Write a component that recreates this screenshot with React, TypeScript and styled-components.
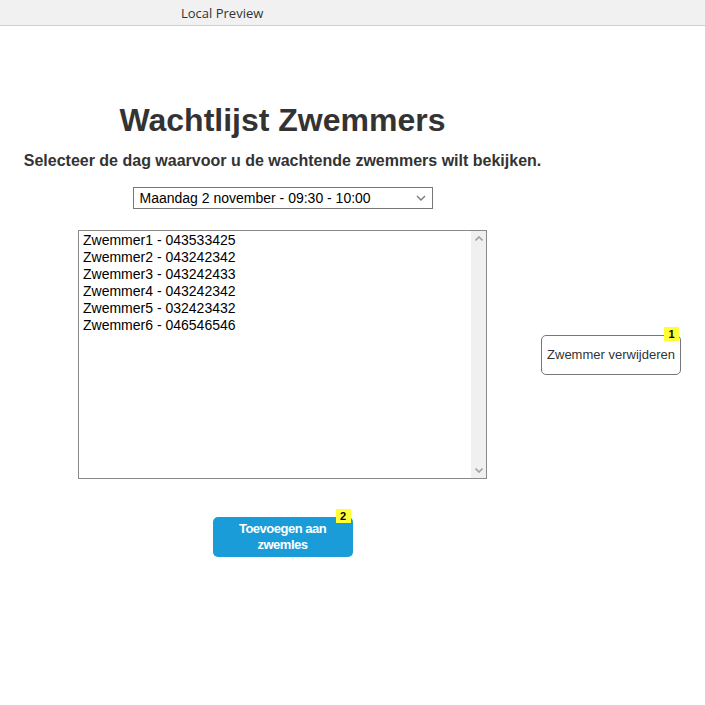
import React from "react";
import styled, { createGlobalStyle } from "styled-components";

const Global = createGlobalStyle`
  html, body { margin: 0; padding: 0; background: #fff; }
  body { font-family: "Liberation Sans", Arial, sans-serif; color: #333; }
`;

const TopBar = styled.div`
  height: 26px;
  background: #f1f1f1;
  border-bottom: 1px solid #d0d0d0;
  box-sizing: border-box;
  display: flex;
  align-items: center;
  padding-left: 181px;
  font-family: "Open Sans", "Noto Sans", sans-serif;
  font-size: 13px;
  color: #333;
`;

const Column = styled.div`
  width: 565px;
  display: flex;
  flex-direction: column;
  align-items: center;
`;

const Title = styled.h1`
  margin: 76px 0 0;
  font-size: 32px;
  line-height: 37px;
  font-weight: bold;
  color: #333;
`;

const Subtitle = styled.h3`
  margin: 12px 0 0;
  font-size: 16px;
  line-height: 19px;
  font-weight: bold;
  color: #333;
`;

const SelectWrap = styled.div`
  position: relative;
  margin-top: 17px;
  width: 300px;
  height: 22px;
`;

const DaySelect = styled.select`
  appearance: none;
  -webkit-appearance: none;
  width: 300px;
  height: 22px;
  box-sizing: border-box;
  font-family: "Liberation Sans", Arial, sans-serif;
  font-size: 14px;
  color: #000;
  border: 1px solid #767676;
  border-radius: 0;
  background: #fff;
  padding: 0 6px;
  outline: none;
`;

const SelectArrow = styled.svg`
  position: absolute;
  right: 7px;
  top: 8px;
  pointer-events: none;
`;

const ListRow = styled.div`
  align-self: flex-start;
  width: 705px;
  display: flex;
  align-items: center;
  margin-top: 21px;
`;

const ListBox = styled.div`
  margin-left: 78px;
  width: 409px;
  height: 249px;
  box-sizing: border-box;
  border: 1px solid #8a8a8a;
  display: flex;
`;

const ListItems = styled.div`
  flex: 1;
  padding: 1px 4px;
  font-size: 14px;
  line-height: 17px;
  color: #000;
`;

const Item = styled.div``;

const ScrollTrack = styled.div`
  width: 15px;
  background: #f0f0f0;
  display: flex;
  flex-direction: column;
  justify-content: space-between;
  align-items: center;
  padding: 5px 0;
`;

const BadgeWrap = styled.div`
  position: relative;
  display: inline-block;
`;

const Badge = styled.span`
  position: absolute;
  top: -8px;
  right: 2px;
  width: 15px;
  height: 14px;
  background: #ffff33;
  color: #000;
  font-size: 11px;
  font-weight: bold;
  line-height: 14px;
  text-align: center;
`;

const Button = styled.button<{ $primary?: boolean }>`
  display: block;
  width: 140px;
  height: 40px;
  border-radius: 5px;
  font-family: "Liberation Sans", Arial, sans-serif;
  font-size: 13px;
  line-height: 16px;
  padding: 0;
  white-space: ${(p) => (p.$primary ? "normal" : "nowrap")};
  letter-spacing: ${(p) => (p.$primary ? "-0.5px" : "0")};
  cursor: pointer;
  border: ${(p) => (p.$primary ? "none" : "1px solid #767676")};
  background: ${(p) => (p.$primary ? "#1a9cd8" : "#fff")};
  color: ${(p) => (p.$primary ? "#fff" : "#333")};
  font-weight: ${(p) => (p.$primary ? "bold" : "normal")};
`;

const Side = styled.div`
  margin-left: 54px;
`;

const AddWrap = styled.div`
  margin-top: 38px;
`;

const swimmers = [
  "Zwemmer1 - 043533425",
  "Zwemmer2 - 043242342",
  "Zwemmer3 - 043242433",
  "Zwemmer4 - 043242342",
  "Zwemmer5 - 032423432",
  "Zwemmer6 - 046546546",
];

export default function App() {
  return (
    <>
      <Global />
      <TopBar>Local Preview</TopBar>
      <Column>
        <Title>Wachtlijst Zwemmers</Title>
        <Subtitle>Selecteer de dag waarvoor u de wachtende zwemmers wilt bekijken.</Subtitle>
        <SelectWrap>
          <DaySelect defaultValue="a">
            <option value="a">Maandag 2 november - 09:30 - 10:00</option>
          </DaySelect>
          <SelectArrow width="10" height="6" viewBox="0 0 10 6">
            <path d="M1 1 L5 5 L9 1" fill="none" stroke="#777" strokeWidth="1.3" />
          </SelectArrow>
        </SelectWrap>
        <ListRow>
          <ListBox>
            <ListItems>
              {swimmers.map((s) => (
                <Item key={s}>{s}</Item>
              ))}
            </ListItems>
            <ScrollTrack>
              <svg width="8" height="5" viewBox="0 0 8 5">
                <path d="M0.5 4.5 L4 1 L7.5 4.5" fill="none" stroke="#a3a3a3" strokeWidth="1.6" />
              </svg>
              <svg width="8" height="5" viewBox="0 0 8 5">
                <path d="M0.5 0.5 L4 4 L7.5 0.5" fill="none" stroke="#a3a3a3" strokeWidth="1.6" />
              </svg>
            </ScrollTrack>
          </ListBox>
          <Side>
            <BadgeWrap>
              <Button>Zwemmer verwijderen</Button>
              <Badge>1</Badge>
            </BadgeWrap>
          </Side>
        </ListRow>
        <AddWrap>
          <BadgeWrap>
            <Button $primary>Toevoegen aan zwemles</Button>
            <Badge>2</Badge>
          </BadgeWrap>
        </AddWrap>
      </Column>
    </>
  );
}
